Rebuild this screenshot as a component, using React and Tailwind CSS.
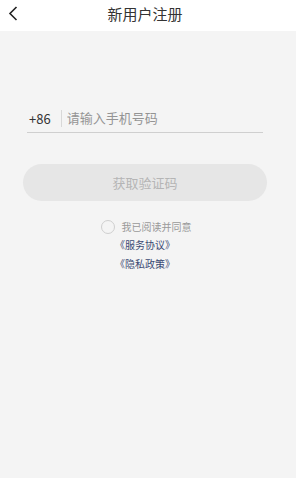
import React, { useState } from 'react';

function App() {
  const [agreed, setAgreed] = useState(false);
  const [phone, setPhone] = useState('');

  return (
    <div
      className="w-[300px] h-[478px] bg-white flex flex-col overflow-hidden"
      style={{ fontFamily: '"Noto Sans CJK SC", "Noto Sans", sans-serif' }}
    >
      {/* header */}
      <div className="h-[31px] w-[290px] flex items-center relative shrink-0">
        <button className="absolute left-[6px] top-[5px] w-[14px] h-[16px] flex items-center justify-center">
          <svg width="10" height="15" viewBox="0 0 10 15" fill="none">
            <path d="M8.5 1 L2 7.5 L8.5 14" stroke="#222" strokeWidth="1.6" />
          </svg>
        </button>
        <h1 className="w-full text-center text-[15px] leading-none text-[#333] -mt-[4px]">新用户注册</h1>
      </div>

      {/* body */}
      <div className="flex-1 w-[296px] bg-[#f4f4f4]">
        <div className="w-[290px] flex flex-col items-center">
          <div className="mt-[76px] w-[236px] flex items-center h-[22px] border-b border-[#cfcfcf] pb-[3px] box-content">
            <span className="text-[13px] text-[#333] pl-[2px] leading-none">+86</span>
            <span className="ml-[10px] w-px h-[17px] bg-[#d8d8d8]"></span>
            <input
              value={phone}
              onChange={(e) => setPhone(e.target.value)}
              placeholder="请输入手机号码"
              className="ml-[5px] flex-1 bg-transparent outline-none text-[13px] text-[#333] placeholder:text-[#949494]"
            />
          </div>

          <button className="mt-[31px] w-[244px] h-[37px] rounded-full bg-[#e6e6e6] text-[13px] text-[#b5b5b5]">
            获取验证码
          </button>

          <div className="mt-[18px] flex items-center ml-[2px]">
            <button
              onClick={() => setAgreed(!agreed)}
              className="w-[14px] h-[14px] rounded-full border border-[#cfcfcf]"
            ></button>
            <span className="ml-[7px] text-[10px] text-[#999]">我已阅读并同意</span>
          </div>
          <a className="mt-[1px] text-[10px] text-[#3b4a73] leading-[19px]">《服务协议》</a>
          <a className="text-[10px] text-[#3b4a73] leading-[19px]">《隐私政策》</a>
        </div>
      </div>
    </div>
  );
}

export default App;
